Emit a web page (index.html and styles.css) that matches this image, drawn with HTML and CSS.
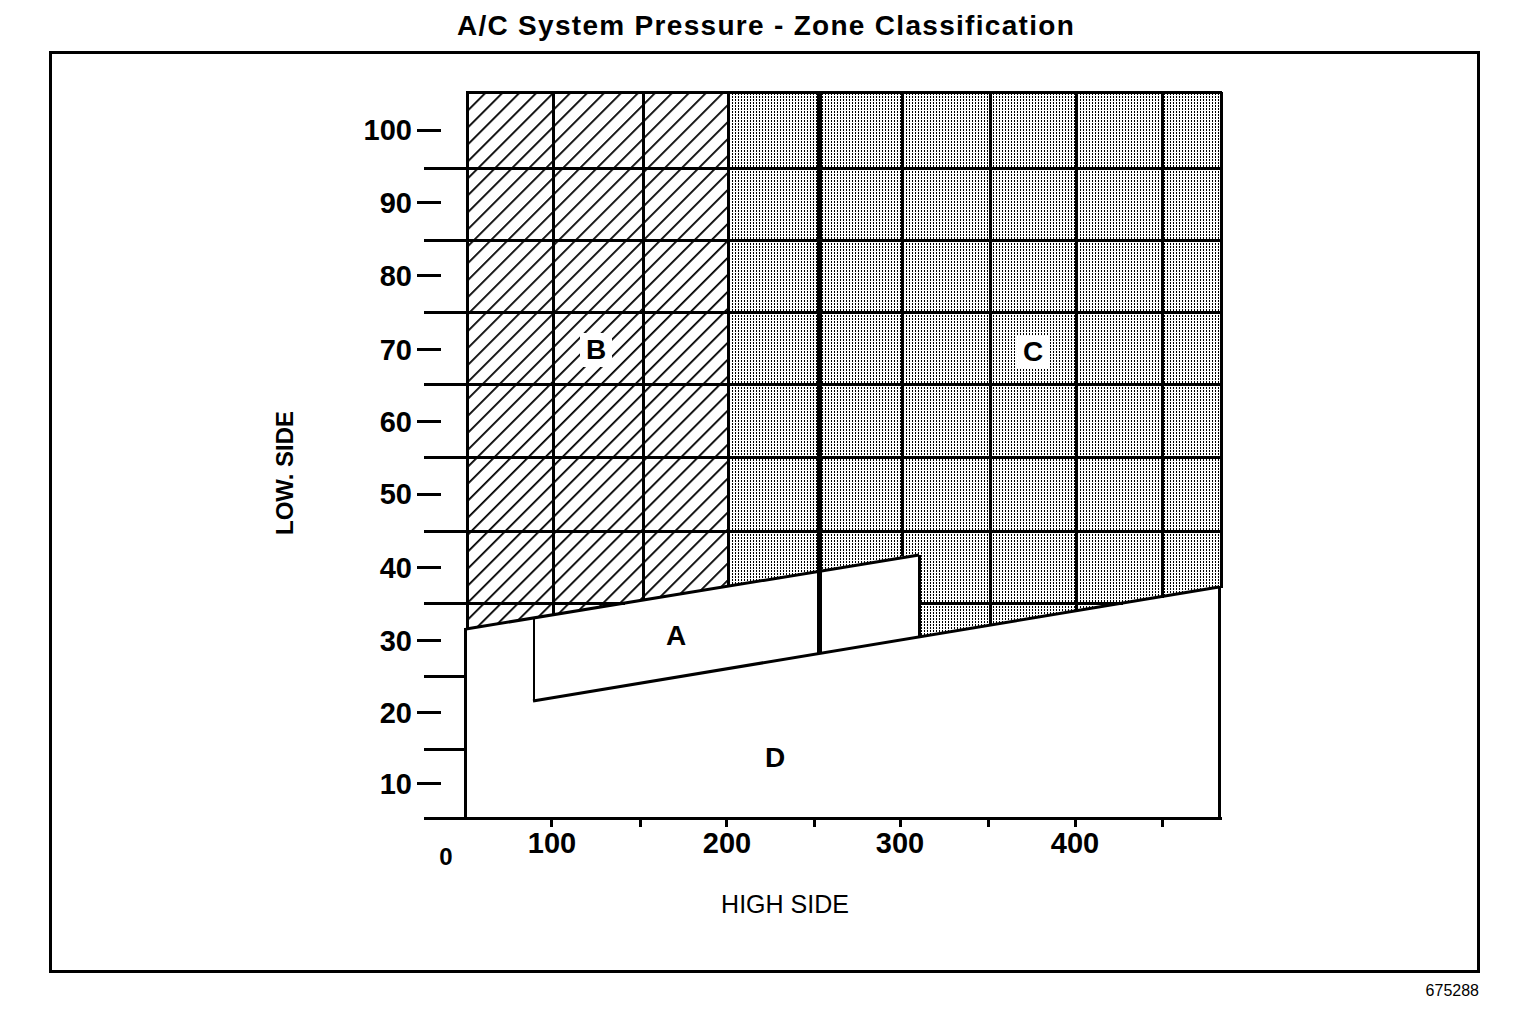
FILE: index.html
```html
<!DOCTYPE html>
<html lang="en">
<head>
<meta charset="utf-8">
<title>A/C System Pressure - Zone Classification</title>
<link rel="stylesheet" href="styles.css">
</head>
<body>
<div class="page">
  <h1 class="title">A/C System Pressure - Zone Classification</h1>
  <div class="frame">
    <svg class="chart" width="1425" height="916" viewBox="52 54 1425 916" xmlns="http://www.w3.org/2000/svg">
      <defs>
        <pattern id="hatch" width="12" height="12" patternUnits="userSpaceOnUse" patternTransform="rotate(45)">
          <rect width="1.8" height="12" fill="#000"/>
        </pattern>
        <pattern id="dots" width="3" height="3" patternUnits="userSpaceOnUse">
          <rect width="1" height="2" fill="#000"/>
        </pattern>
      </defs>

      <!-- zones -->
      <polygon points="467,92 728,92 728,586 466,629" fill="url(#hatch)"/>
      <polygon points="728,92 1221,92 1221,587 919,637 919,555 728,586" fill="url(#dots)"/>
      <rect x="580" y="333" width="32" height="34" fill="#fff"/>
      <rect x="1017" y="335" width="32" height="34" fill="#fff"/>

      <!-- grid -->
      <g class="grid">
        <path d="M424 168.5H1222 M424 240.5H1222 M424 312.5H1222 M424 384.5H1222 M424 457.5H1222 M424 531.5H1222 M424 603.5H625 M919 603.5H1123 M424 676.5H466 M424 749.5H466 M424 818.5H1222"/>
        <path d="M466 92.5H1222"/>
        <path d="M417 130.5H441 M417 202.5H441 M417 275.5H441 M417 349.5H441 M417 421.5H441 M417 494.5H441 M417 567.5H441 M417 640.5H441 M417 712.5H441 M417 783.5H441"/>
        <path d="M467.5 92V629 M465.5 628V818 M553.5 92V616 M643.5 92V601 M728.5 92V587 M902.5 92V556 M990.5 92V626 M1076.5 92V612 M1162.5 92V598 M1221.5 92V588 M1219.5 586V820"/>
        <path d="M551.5 818V827 M640.5 818V827 M726.5 818V827 M814.5 818V827 M900.5 818V827 M988.5 818V827 M1075.5 818V827 M1162.5 818V827"/>
        <path class="thick" d="M819 92V654"/>
        <path class="thin" d="M534 618V701"/>
        <path d="M919.5 555V638"/>
      </g>
      <g class="bounds">
        <path d="M466 629L919 555"/>
        <path d="M533 701L1219 587"/>
      </g>

      <!-- y labels -->
      <g class="num" text-anchor="end">
        <text x="412" y="140">100</text>
        <text x="412" y="213">90</text>
        <text x="412" y="286">80</text>
        <text x="412" y="360">70</text>
        <text x="412" y="432">60</text>
        <text x="412" y="504">50</text>
        <text x="412" y="578">40</text>
        <text x="412" y="651">30</text>
        <text x="412" y="723">20</text>
        <text x="412" y="794">10</text>
      </g>
      <!-- x labels -->
      <g class="num" text-anchor="middle">
        <text x="552" y="853">100</text>
        <text x="727" y="853">200</text>
        <text x="900" y="853">300</text>
        <text x="1075" y="853">400</text>
      </g>
      <text class="zero" x="446" y="865" text-anchor="middle">0</text>

      <!-- zone letters -->
      <g class="zone" text-anchor="middle">
        <text x="596" y="359">B</text>
        <text x="1033" y="361">C</text>
        <text x="676" y="645">A</text>
        <text x="775" y="767">D</text>
      </g>

      <text class="axis" x="785" y="913" text-anchor="middle">HIGH SIDE</text>
      <text class="axis-y" transform="translate(293,473) rotate(-90)" text-anchor="middle">LOW. SIDE</text>
    </svg>
  </div>
  <div class="code">675288</div>
</div>
</body>
</html>
```

FILE: styles.css
```css
body {
  margin: 0;
  background: #fff;
  color: #000;
  font-family: "Liberation Sans", Arial, sans-serif;
}

.page {
  width: 1520px;
}

.title {
  margin: 0;
  padding: 11px 0 0 12px;
  height: 40px;
  line-height: 30px;
  font-size: 28px;
  font-weight: 700;
  letter-spacing: 1.3px;
  text-align: center;
}

.frame {
  margin-left: 49px;
  width: 1431px;
  height: 922px;
  border: 3px solid #000;
  box-sizing: border-box;
}

.chart {
  display: block;
}

.grid path {
  stroke: #000;
  stroke-width: 3;
  fill: none;
  shape-rendering: crispEdges;
}

.grid path.thick {
  stroke-width: 5;
}

.grid path.thin {
  stroke-width: 2;
}

.bounds path {
  stroke: #000;
  stroke-width: 3;
  fill: none;
}

.num {
  font-family: "Liberation Sans", Arial, sans-serif;
  font-size: 29px;
  font-weight: 700;
}

.zero {
  font-family: "Liberation Sans", Arial, sans-serif;
  font-size: 24px;
  font-weight: 700;
}

.zone {
  font-family: "Liberation Sans", Arial, sans-serif;
  font-size: 28px;
  font-weight: 700;
}

.axis {
  font-family: "Liberation Sans", Arial, sans-serif;
  font-size: 25px;
}

.axis-y {
  font-family: "Liberation Sans", Arial, sans-serif;
  font-size: 24px;
  font-weight: 700;
}

.code {
  width: 1479px;
  margin-top: 9px;
  line-height: 18px;
  font-size: 16px;
  text-align: right;
}
```
